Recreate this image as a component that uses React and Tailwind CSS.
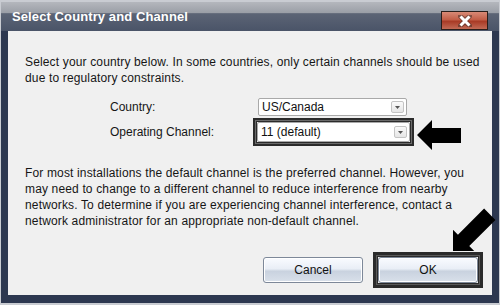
import React from "react"

const font = { fontFamily: '"Liberation Sans", Arial, sans-serif' }

// Dropdown box
const Select = ({ value, className }) => (
  <div
    className={`flex items-center justify-between bg-white border border-[#a9a9a9] rounded-[2px] pl-[3px] pr-[2px] text-[12px] text-[#111] ${className}`}
  >
    <span>{value}</span>
    <div className="w-[13px] h-[12px] border border-[#c4c4c4] rounded-[2px] bg-[linear-gradient(#fafafa,#e6e6e6)] flex items-center justify-center">
      <svg width="5" height="3" viewBox="0 0 5 3">
        <path d="M0 0h5L2.5 3z" fill="#555" />
      </svg>
    </div>
  </div>
)

const Button = ({ children }) => (
  <button className="w-[100px] h-[26px] rounded-[3px] border border-[#7d8899] text-[12px] text-[#111] bg-[linear-gradient(#f9fbff_0%,#e9eef6_45%,#c9d2df_55%,#d9e0ea_100%)] shadow-[inset_0_0_0_1px_#ffffff]">
    {children}
  </button>
)

export default function App() {
  return (
    <div style={font} className="relative w-[500px] h-[305px] overflow-hidden bg-[#2d3850] border-t-[2px] border-l border-r border-b-[2px] border-[#c9ccd2]">
      {/* title bar */}
      <div className="h-[29px] flex items-center justify-between pl-[11px] pr-[11px] bg-[linear-gradient(#b4b7bd_0%,#9a9ea6_38%,#5c6475_40%,#4a5468_100%)]">
        <span className="text-white font-bold text-[13px] tracking-[0.1px] mt-[1px]">
          Select Country and Channel
        </span>
        <div className="w-[47px] h-[19px] mt-[8px] border border-[#2a1e1a] bg-[linear-gradient(#d98a76_0%,#c25e47_45%,#a93b26_55%,#c26a55_100%)] flex items-center justify-center">
          <svg width="14" height="12" viewBox="0 0 14 12">
            <path
              d="M2 1 L7 5 L12 1 M2 11 L7 7 L12 11 M2 1 L12 11 M12 1 L2 11"
              stroke="#3a2a26"
              strokeWidth="4.5"
              strokeLinecap="square"
              fill="none"
              opacity="0.5"
            />
            <path d="M2.5 1.5 L11.5 10.5 M11.5 1.5 L2.5 10.5" stroke="#fff" strokeWidth="3" fill="none" />
          </svg>
        </div>
      </div>

      {/* content panel */}
      <div className="ml-[7px] w-[484px] h-[264px] bg-[#f0f0f0] pt-[23px] pl-[17px] pr-[6px] text-[12px] leading-[16px] tracking-[0.15px] text-[#161616]">
        <p>
          Select your country below. In some countries, only certain channels should be used
          due to regulatory constraints.
        </p>

        <div className="mt-[12px] ml-[85px] flex items-center h-[18px] tracking-normal">
          <span className="w-[148px]">Country:</span>
          <Select value="US/Canada" className="w-[149px] h-[18px]" />
        </div>

        <div className="mt-[2px] ml-[85px] flex items-center h-[28px] tracking-normal">
          <span className="w-[143px]">Operating Channel:</span>
          <div className="border-[4px] border-[#2b2b2b] outline outline-1 outline-[#6a6a6a] -outline-offset-[3px]">
            <Select value="11 (default)" className="w-[153px] h-[20px]" />
          </div>
        </div>

        <p className="mt-[19px] pr-[10px]">
          For most installations the default channel is the preferred channel. However, you
          may need to change to a different channel to reduce interference from nearby
          networks. To determine if you are experiencing channel interference, contact a
          network administrator for an appropriate non-default channel.
        </p>

        <div className="mt-[23px] pr-[3px] flex items-center justify-end gap-[10px] tracking-normal">
          <Button>Cancel</Button>
          <div className="border-[5px] border-[#2b2b2b] outline outline-1 outline-[#5a5a5a] -outline-offset-[4px]">
            <Button>OK</Button>
          </div>
        </div>
      </div>

      {/* pointer arrows */}
      <svg className="absolute left-0 top-0 pointer-events-none" width="500" height="305">
        <polygon points="416,133 431,118 431,126 460,126 460,141 431,141 431,148" fill="#000" />
        <g transform="translate(452,249) rotate(-45)">
          <polygon points="0,0 15,-15 15,-8 52,-8 52,8 15,8 15,15" fill="#000" />
        </g>
      </svg>
    </div>
  )
}
